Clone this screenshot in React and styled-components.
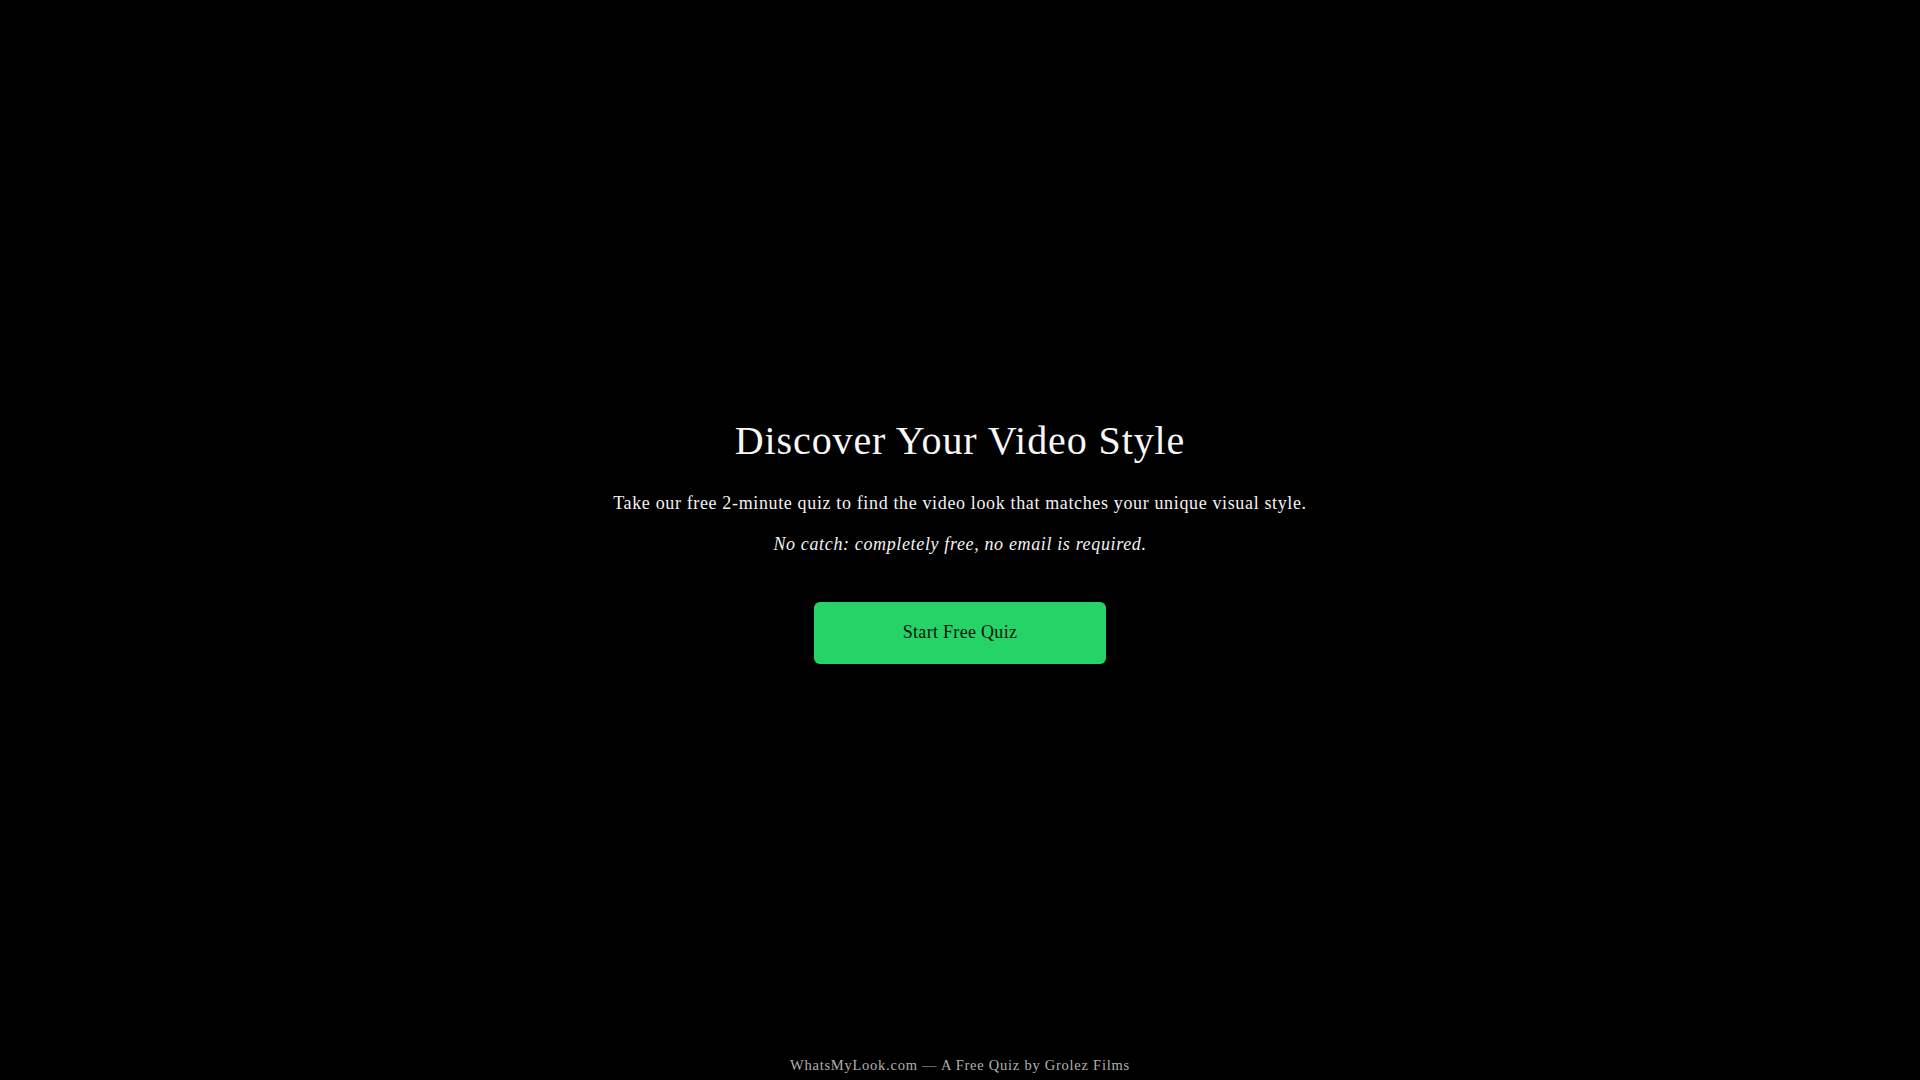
import React from "react";
import styled, { createGlobalStyle } from "styled-components";

const GlobalStyle = createGlobalStyle`
  html, body {
    margin: 0;
    padding: 0;
    background: #000;
  }
  body {
    font-family: "Liberation Serif", "Times New Roman", serif;
    color: #fff;
  }
  * { box-sizing: border-box; }
`;

const Page = styled.div`
  position: relative;
  min-height: 100vh;
  display: flex;
  flex-direction: column;
  background: #000;
`;

const Main = styled.main`
  flex: 1;
  display: flex;
  align-items: center;
  justify-content: center;
`;

const Content = styled.section`
  display: flex;
  flex-direction: column;
  align-items: center;
  text-align: center;
`;

const Title = styled.h1`
  margin: 0;
  font-size: 40px;
  line-height: 48px;
  font-weight: 400;
  letter-spacing: 0.9px;
  color: #f7f7f7;
`;

const Lead = styled.p`
  margin: ${(p) => p.$top}px 0 0;
  font-size: 18px;
  line-height: 27px;
  letter-spacing: 0.64px;
  color: #f2f2f2;
  font-style: ${(p) => (p.$italic ? "italic" : "normal")};
`;

const StartButton = styled.button`
  margin-top: 44px;
  width: 292px;
  height: 62px;
  border: none;
  border-radius: 6px;
  background: #25d366;
  color: #111;
  font-family: "Liberation Serif", "Times New Roman", serif;
  font-size: 18px;
  letter-spacing: 0.3px;
  cursor: pointer;
`;

const Footer = styled.footer`
  position: absolute;
  left: 0;
  right: 0;
  bottom: 0;
  height: 30px;
  display: flex;
  align-items: center;
  justify-content: center;
  font-size: 14.5px;
  letter-spacing: 0.75px;
  color: #b0b0b0;
`;

export default function App() {
  return (
    <Page>
      <GlobalStyle />
      <Main>
        <Content>
          <Title>Discover Your Video Style</Title>
          <Lead $top={25}>
            Take our free 2-minute quiz to find the video look that matches your unique visual style.
          </Lead>
          <Lead $top={14} $italic>
            No catch: completely free, no email is required.
          </Lead>
          <StartButton>Start Free Quiz</StartButton>
        </Content>
      </Main>
      <Footer>WhatsMyLook.com — A Free Quiz by Grolez Films</Footer>
    </Page>
  );
}
